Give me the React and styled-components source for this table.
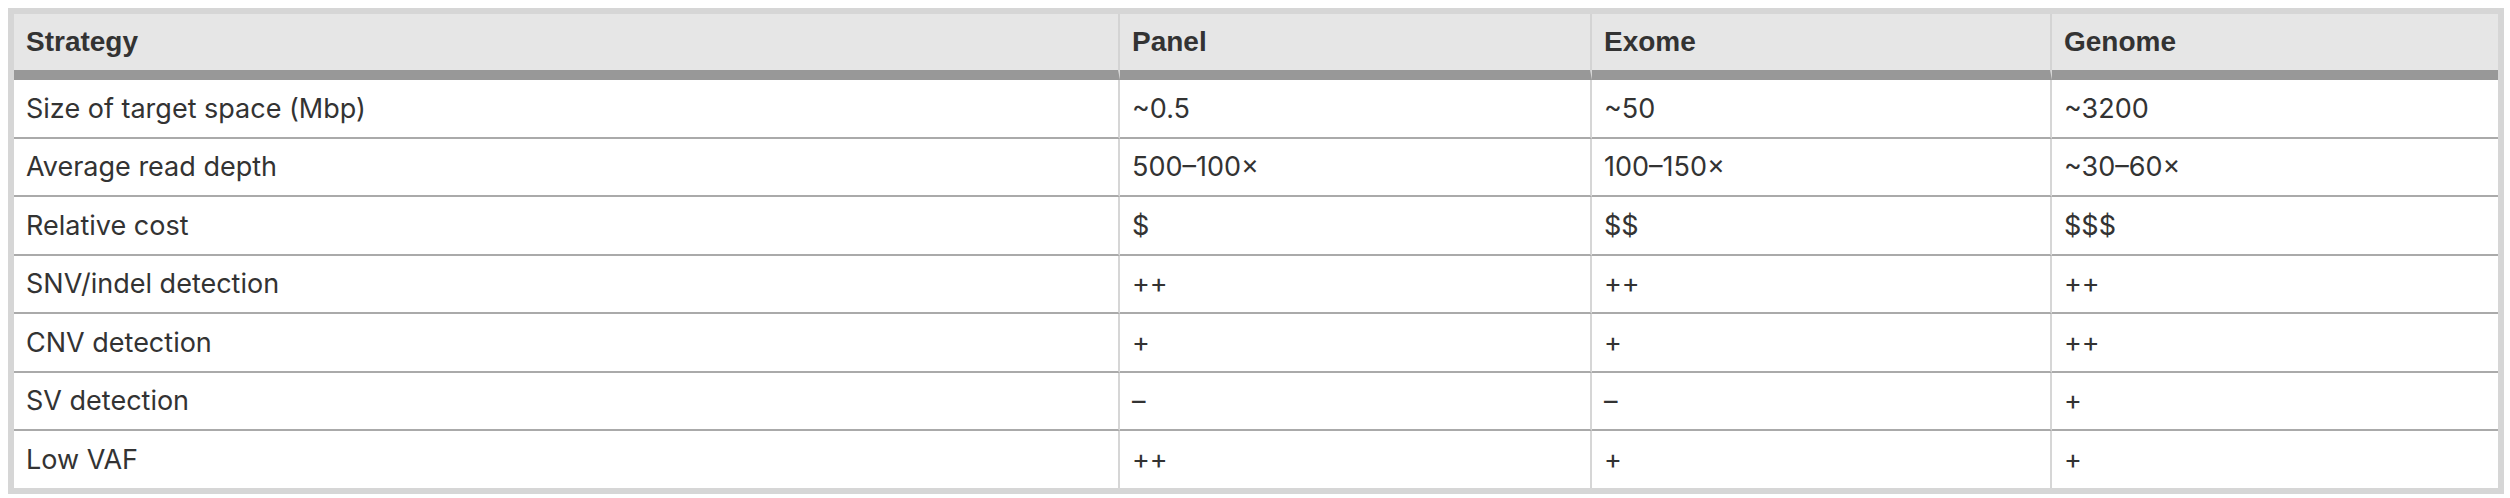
import React from 'react';
import styled, { createGlobalStyle } from 'styled-components';

const GlobalStyle = createGlobalStyle`
    *, *::before, *::after {
        box-sizing: border-box;
    }
    body {
        margin: 8px 6px 8px 8px;
        background: #ffffff;
        font-family: Inter, "Noto Sans", sans-serif;
    }
`;

const Table = styled.table`
    width: 2496px;
    table-layout: fixed;
    border-collapse: separate;
    border-spacing: 0;
    border: 6px solid #d6d6d6;
    color: #333333;
`;

const HeadCell = styled.th`
    width: ${(props) => props.width}px;
    height: 66px;
    padding: 0 12px;
    text-align: left;
    vertical-align: middle;
    background: #e6e6e6;
    font-family: "Liberation Sans", Arial, sans-serif;
    font-size: 28px;
    font-weight: bold;
    border-bottom: 10px solid #989898;
    border-right: ${(props) => (props.last ? 'none' : '2px solid #d4d4d4')};
`;

const Row = styled.tr`
    &:last-child td {
        height: 56.5px;
        border-bottom: none;
    }
`;

const Cell = styled.td`
    height: 58.5px;
    padding: 0 12px;
    vertical-align: middle;
    font-size: 27px;
    font-weight: 400;
    white-space: nowrap;
    border-bottom: 2px solid #aaaaaa;
    border-right: ${(props) => (props.last ? 'none' : '2px solid #d6d6d6')};
`;

const columns = [
    { title: 'Strategy', width: 1106 },
    { title: 'Panel', width: 472 },
    { title: 'Exome', width: 460 },
    { title: 'Genome', width: 446 },
];

const rows = [
    ['Size of target space (Mbp)', '~0.5', '~50', '~3200'],
    ['Average read depth', '500–100×', '100–150×', '~30–60×'],
    ['Relative cost', '$', '$$', '$$$'],
    ['SNV/indel detection', '++', '++', '++'],
    ['CNV detection', '+', '+', '++'],
    ['SV detection', '–', '–', '+'],
    ['Low VAF', '++', '+', '+'],
];

const App = () => {
    return (
        <>
            <GlobalStyle />
            <Table>
                <thead>
                    <tr>
                        {columns.map((col, i) => (
                            <HeadCell key={col.title} width={col.width} last={i === columns.length - 1}>
                                {col.title}
                            </HeadCell>
                        ))}
                    </tr>
                </thead>
                <tbody>
                    {rows.map((row) => (
                        <Row key={row[0]}>
                            {row.map((value, i) => (
                                <Cell key={i} last={i === row.length - 1}>
                                    {value}
                                </Cell>
                            ))}
                        </Row>
                    ))}
                </tbody>
            </Table>
        </>
    );
};

export default App;
